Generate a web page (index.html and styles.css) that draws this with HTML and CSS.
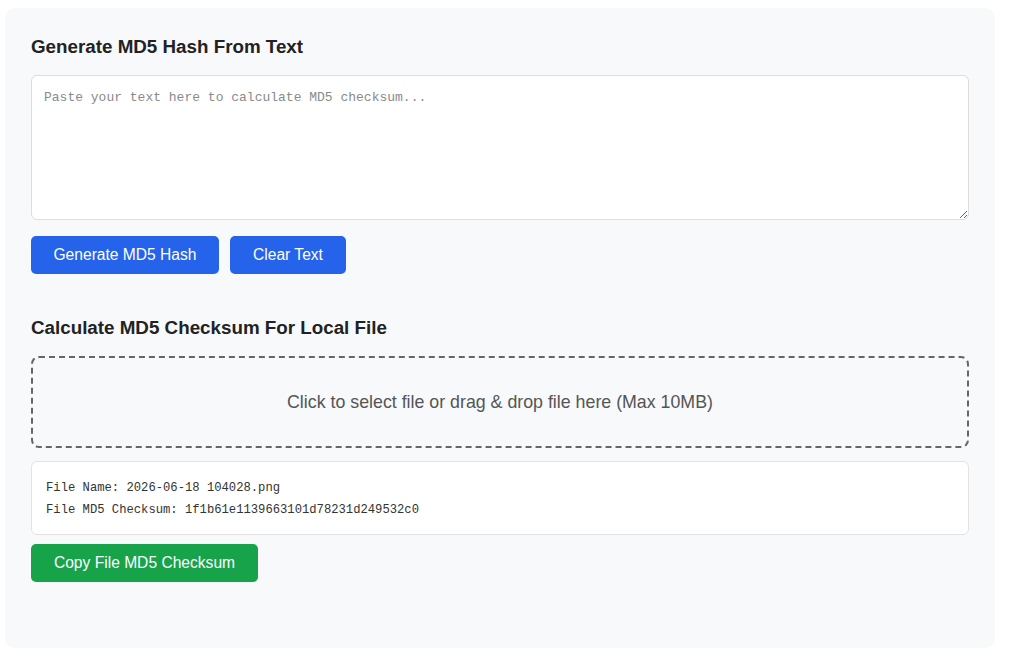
FILE: index.html
```html
<!DOCTYPE html>
<html>
<head>
<meta charset="utf-8">
<link rel="stylesheet" href="styles.css">
</head>
<body>
<div class="card">
  <h2 class="title">Generate MD5 Hash From Text</h2>
  <textarea class="input" placeholder="Paste your text here to calculate MD5 checksum..."></textarea>
  <div class="actions">
    <button class="btn btn-blue btn-gen">Generate MD5 Hash</button>
    <button class="btn btn-blue btn-clear">Clear Text</button>
  </div>
  <h2 class="title title-second">Calculate MD5 Checksum For Local File</h2>
  <div class="drop">Click to select file or drag &amp; drop file here (Max 10MB)</div>
  <div class="result">
    <div>File Name: 2026-06-18 104028.png</div>
    <div>File MD5 Checksum: 1f1b61e1139663101d78231d249532c0</div>
  </div>
  <button class="btn btn-green">Copy File MD5 Checksum</button>
</div>
</body>
</html>
```

FILE: styles.css
```css
html, body {
  margin: 0;
  padding: 0;
  background: #ffffff;
}
body {
  padding: 8px 0 0 5px;
  font-family: "Liberation Sans", Arial, sans-serif;
}
.card {
  box-sizing: border-box;
  width: 990px;
  height: 640px;
  background: #f8f9fa;
  border-radius: 10px;
  padding: 28px 26px;
  display: flex;
  flex-direction: column;
  align-items: flex-start;
}
.title {
  margin: 0;
  font-size: 18.8px;
  line-height: 22px;
  font-weight: bold;
  color: #222222;
}
.input {
  box-sizing: border-box;
  margin-top: 17px;
  width: 938px;
  height: 145px;
  border: 1px solid #dddddd;
  border-radius: 6px;
  background: #ffffff;
  padding: 12px 12px;
  font-family: "Liberation Mono", monospace;
  font-size: 13px;
  line-height: 20px;
  color: #333;
  resize: vertical;
  outline: none;
}
.input::placeholder {
  color: #8a8a8a;
}
.actions {
  display: flex;
  gap: 11px;
  margin-top: 16px;
}
.btn {
  box-sizing: border-box;
  height: 38px;
  border: none;
  border-radius: 5px;
  color: #ffffff;
  font-family: "Liberation Sans", Arial, sans-serif;
  font-size: 15.6px;
  padding: 0;
  white-space: nowrap;
  text-align: center;
  cursor: pointer;
}
.btn-blue {
  background: #2563eb;
}
.btn-gen {
  width: 188px;
}
.btn-clear {
  width: 116px;
}
.btn-green {
  background: #16a34a;
  width: 227px;
  margin-top: 9px;
}
.title-second {
  margin-top: 43px;
}
.drop {
  box-sizing: border-box;
  margin-top: 17px;
  width: 938px;
  height: 92px;
  border: 2px dashed #666666;
  border-radius: 8px;
  display: flex;
  align-items: center;
  justify-content: center;
  font-size: 17.8px;
  color: #555555;
}
.result {
  box-sizing: border-box;
  margin-top: 13px;
  width: 938px;
  height: 74px;
  background: #ffffff;
  border: 1px solid #e3e3e3;
  border-radius: 6px;
  padding: 15px 14px;
  font-family: "Liberation Mono", monospace;
  font-size: 12.2px;
  line-height: 22px;
  color: #333333;
}
```
